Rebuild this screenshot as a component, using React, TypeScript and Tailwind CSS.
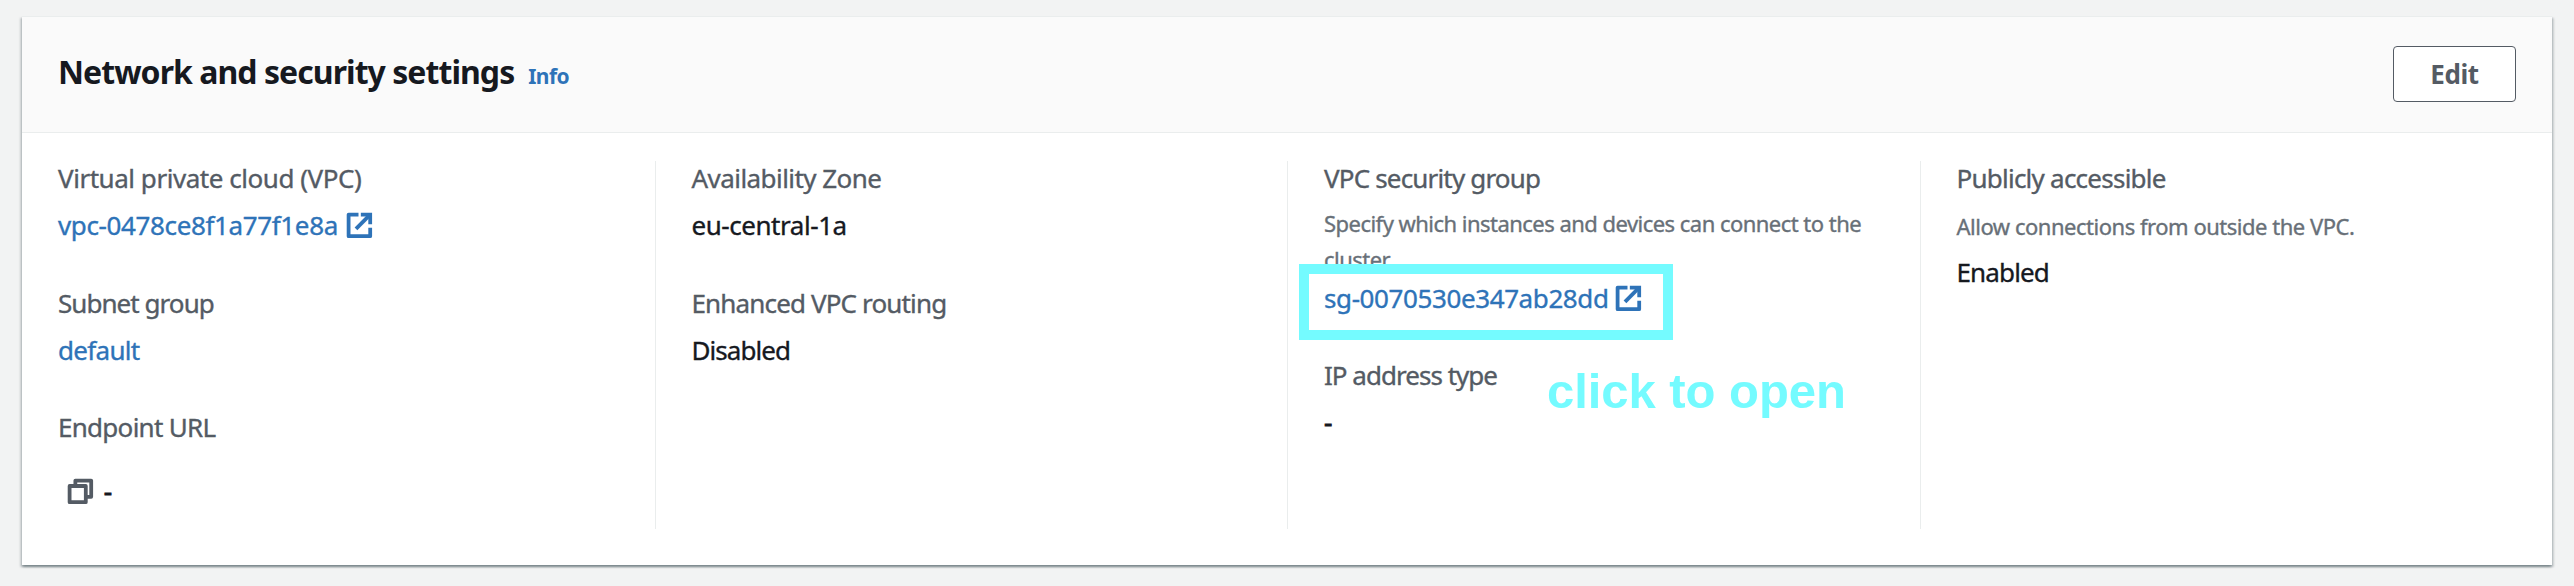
import React from "react";

function ExternalIcon() {
  return (
    <svg viewBox="0 0 16 16" className="size-[28.8px] shrink-0" fill="none" stroke="currentColor" strokeWidth="2.1" strokeLinejoin="round">
      <path d="M7.5 2H2v12h12V9.3" />
      <path d="M8.8 2H14v5.3" strokeLinejoin="miter" />
      <path d="M13.8 2.2 6.1 9.9" />
    </svg>
  );
}

function CopyIcon() {
  return (
    <svg viewBox="0 0 16 16" className="size-[28.8px] shrink-0" fill="none" stroke="currentColor" strokeWidth="2.1" strokeLinejoin="round">
      <path d="M2 5h9v9H2z" />
      <path d="M5.2 5V2H14v9h-3" />
    </svg>
  );
}

const label = "block whitespace-nowrap text-[26px] leading-[34px] text-[#545b64]";
const value = "whitespace-nowrap text-[26px] leading-[34px] text-[#16191f]";
const link = "flex items-center whitespace-nowrap text-[26px] leading-[34px] text-[#2e73b8]";
const hint = "text-[22px] leading-[36px] text-[#687078]";
const column = "h-[368px] border-l border-[#eaeded] pl-9";

export default function App() {
  return (
    <div className="relative h-[586px] w-[2574px] overflow-hidden bg-[#f2f3f3] px-[22px] pt-4 font-['Noto_Sans',sans-serif]">
      <section className="h-[549px] border-t border-[#eaeded] bg-white shadow-[0_2px_2px_rgba(0,28,36,0.3),2px_2px_2px_rgba(0,28,36,0.15),-2px_2px_2px_rgba(0,28,36,0.15)]">
        <header className="flex h-[116px] items-start justify-between border-b border-[#eaeded] bg-[#fafafa] px-9">
          <div className="mt-[35px] flex items-baseline">
            <h2 className="whitespace-nowrap text-[32px] leading-10 font-bold tracking-[-0.95px] text-[#16191f]">Network and security settings</h2>
            <a className="ml-[14px] text-[21px] font-bold tracking-[-0.6px] text-[#2e73b8]">Info</a>
          </div>
          <button className="mt-[29px] h-14 w-[123px] rounded-[4px] border border-[#545b64] bg-white pb-px text-[26px] leading-9 font-bold tracking-[-0.4px] text-[#545b64]">Edit</button>
        </header>

        <div className="grid grid-cols-4 pt-7 [-webkit-text-stroke:0.35px_currentColor]">
          <div className="h-[368px] pl-9">
            <span className={`${label} tracking-[-0.46px]`}>Virtual private cloud (VPC)</span>
            <a className={`${link} mt-[13px] tracking-[-0.37px]`}>
              vpc-0478ce8f1a77f1e8a
              <span className="ml-[7px] pt-px"><ExternalIcon /></span>
            </a>
            <span className={`${label} mt-[44px] tracking-[-0.95px]`}>Subnet group</span>
            <a className={`${link} mt-[13px] tracking-[-0.7px]`}>default</a>
            <span className={`${label} mt-[43px] tracking-[-0.72px]`}>Endpoint URL</span>
            <div className={`${value} mt-[30px] flex items-center gap-[9px] pl-[8px]`}>
              <span className="text-[#545b64]"><CopyIcon /></span>
              <span className="[-webkit-text-stroke:0.8px_currentColor]">-</span>
            </div>
          </div>

          <div className={column}>
            <span className={`${label} tracking-[-0.55px]`}>Availability Zone</span>
            <div className={`${value} mt-[13px] tracking-[-0.45px]`}>eu-central-1a</div>
            <span className={`${label} mt-[44px] tracking-[-0.85px]`}>Enhanced VPC routing</span>
            <div className={`${value} mt-[13px] tracking-[-0.95px]`}>Disabled</div>
          </div>

          <div className={column}>
            <span className={`${label} tracking-[-0.83px]`}>VPC security group</span>
            <p className={`${hint} mt-[10px] w-[560px] tracking-[-0.53px]`}>Specify which instances and devices can connect to the cluster.</p>
            <a className={`${link} mt-[4px] tracking-[-0.4px]`}>
              sg-0070530e347ab28dd
              <span className="ml-[5px] pt-px"><ExternalIcon /></span>
            </a>
            <span className={`${label} mt-[43px] tracking-[-0.98px]`}>IP address type</span>
            <div className={`${value} mt-[13px] [-webkit-text-stroke:0.8px_currentColor]`}>-</div>
          </div>

          <div className={column}>
            <span className={`${label} tracking-[-0.76px]`}>Publicly accessible</span>
            <p className={`${hint} mt-[13px] tracking-[-0.48px]`}>Allow connections from outside the VPC.</p>
            <div className={`${value} mt-[11px] tracking-[-0.85px]`}>Enabled</div>
          </div>
        </div>
      </section>

      <div className="absolute top-[264px] left-[1299px] h-[76px] w-[374px] border-[10px] border-[#74fbff]" />
      <div className="absolute top-[363px] left-[1547px] whitespace-nowrap font-['Liberation_Sans',sans-serif] text-[49px] leading-[56px] font-bold tracking-[-0.05px] text-[#74fbff]">click to open</div>
    </div>
  );
}
